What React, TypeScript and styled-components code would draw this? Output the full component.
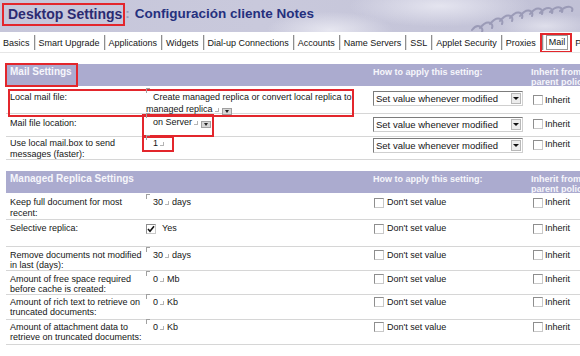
import React from 'react'
import styled, { createGlobalStyle } from 'styled-components'

const Global = createGlobalStyle`
  html, body { margin: 0; padding: 0; background: #fff; overflow: hidden; }
  body { width: 580px; font-family: "Liberation Sans", Arial, sans-serif; color: #151515; }
`

const RED = '#e3262c'

const Banner = styled.header`
  height: 32px;
  box-sizing: border-box;
  display: flex;
  align-items: flex-start;
  padding: 3px 0 0 2px;
  overflow: hidden;
  background:
    radial-gradient(ellipse 90px 26px at 330px 30px, rgba(236,236,244,.85), transparent 70%),
    radial-gradient(ellipse 130px 30px at 440px 6px, rgba(232,232,242,.9), transparent 70%),
    radial-gradient(ellipse 70px 20px at 545px 26px, rgba(230,230,240,.8), transparent 70%),
    linear-gradient(90deg, #c6c6da 0%, #c9c9dc 45%, #c1c1d6 100%);
`

const Title = styled.h1`
  margin: 0;
  font-size: 14px;
  line-height: 16px;
  font-weight: bold;
  color: #2b2b72;
  border: 2px solid ${RED};
  padding: 1px 1px 2px 4px;
  white-space: nowrap;
`

const Subtitle = styled.h2`
  margin: 3px 0 0 0;
  font-size: 13.5px;
  line-height: 16px;
  font-weight: bold;
  color: #25307e;
  white-space: nowrap;
`

const Colon = styled.span`
  color: #9a9ab8;
  margin-right: 5px;
`

const Coil = styled.svg`
  flex: none;
  margin-left: auto;
  margin-top: 1px;
`

const TabBar = styled.nav`
  display: flex;
  align-items: center;
  height: 19px;
  margin-top: 1px;
  font-size: 9px;
  white-space: nowrap;
  overflow: hidden;
  border-bottom: 1px solid #e6e6e6;
`

const Tab = styled.span`
  padding: 0 4px 0 3px;
  line-height: 14px;
  flex: none;
`

const TabSep = styled.span`
  flex: none;
  width: 1px;
  height: 15px;
  background: #8e8e8e;
  border-right: 1px solid #e0e0e0;
`

const ActiveTab = styled.span`
  flex: none;
  display: flex;
  align-items: center;
  gap: 2px;
  height: 20px;
  box-sizing: border-box;
  border: 2px solid ${RED};
  padding: 0 2px 0 0;
`

const ActiveLabel = styled.span`
  border: 1px solid #9a9a9a;
  padding: 0 2px;
  line-height: 13px;
`

const Panel = styled.main`
  padding: 11px 0 0 6px;
`

const Section = styled.section<{ $gap: number }>`
  margin-top: ${p => p.$gap}px;
`

const Bar = styled.div`
  display: grid;
  grid-template-columns: 367px 158px 1fr;
  height: 22px;
  background: #ababcf;
  color: #f6f6fb;
  font-weight: bold;
  white-space: nowrap;
`

const BarTitle = styled.div<{ $marked?: boolean }>`
  justify-self: start;
  margin: -1px 0 0 -1px;
  padding: 1px 4px 1px 3px;
  font-size: 10px;
  line-height: 12px;
  border: 2px solid ${p => (p.$marked ? RED : 'transparent')};
`

const BarCol = styled.div`
  font-size: 9px;
  line-height: 10px;
  padding-top: 3px;
`

const Row = styled.div<{ $h: number; $pt: number; $lh: number }>`
  display: grid;
  grid-template-columns: 367px 158px 1fr;
  align-items: start;
  height: ${p => p.$h}px;
  box-sizing: border-box;
  padding-top: ${p => p.$pt}px;
  border-bottom: 1px solid #d6d6d6;
  font-size: 9px;
  line-height: ${p => p.$lh}px;
  white-space: nowrap;
`

const Main = styled.div<{ $marked?: boolean }>`
  display: grid;
  grid-template-columns: ${p => (p.$marked ? '132px 210px' : '136px 212px')};
  justify-self: start;
  align-self: stretch;
  ${p =>
    p.$marked &&
    `margin: 0 0 2px 4px; box-shadow: 0 0 0 2px ${RED};`}
`

const Label = styled.div<{ $flush?: boolean }>`
  padding-left: ${p => (p.$flush ? 0 : 4)}px;
`

const Value = styled.div`
  padding-left: 4px;
  white-space: normal;
`

const Framed = styled.span<{ $w: number; $h: number; $mt: number }>`
  display: inline-block;
  vertical-align: top;
  box-sizing: border-box;
  width: ${p => p.$w}px;
  height: ${p => p.$h}px;
  margin: ${p => p.$mt}px 0 0 -2px;
  padding-left: 2px;
  box-shadow: 0 0 0 2px ${RED};
`

const OpenMark = styled.span`
  display: inline-block;
  width: 3px;
  height: 4px;
  border-top: 1px solid #a0a0a0;
  border-left: 1px solid #a0a0a0;
  vertical-align: top;
  margin: -3px 3px 0 0;
`

const CloseMark = styled.span`
  display: inline-block;
  width: 3px;
  height: 3px;
  border-right: 1px solid #b4b4b4;
  border-bottom: 1px solid #b4b4b4;
  margin: 0 3px 0 2px;
`

const DropBtn = styled.span`
  display: inline-flex;
  align-items: center;
  justify-content: center;
  width: 10px;
  height: 7px;
  box-sizing: border-box;
  background: #d6d6d6;
  border: 1px solid #a0a0a0;
  vertical-align: -1px;
  &::after {
    content: '';
    border-left: 2px solid transparent;
    border-right: 2px solid transparent;
    border-top: 3px solid #222;
  }
`

const Select = styled.div`
  display: flex;
  align-items: center;
  width: 150px;
  height: 15px;
  box-sizing: border-box;
  padding-left: 2px;
  background: #fff;
  border: 1px solid #7c7c7c;
  border-right-color: #cfcfcf;
  border-bottom-color: #cfcfcf;
  font-size: 9.5px;
  line-height: 13px;
`

const SelectText = styled.span`
  flex: 1;
`

const SelectArrow = styled.span`
  display: flex;
  align-items: center;
  justify-content: center;
  width: 10px;
  height: 11px;
  margin-right: 1px;
  box-sizing: border-box;
  background: #ececec;
  border: 1px solid #b8b8b8;
  &::after {
    content: '';
    border-left: 3px solid transparent;
    border-right: 3px solid transparent;
    border-top: 3px solid #111;
  }
`

const Cell = styled.div<{ $pl: number; $mt?: number }>`
  padding-left: ${p => p.$pl}px;
  margin-top: ${p => p.$mt ?? 0}px;
`

const CheckLabel = styled.label<{ $gap: number }>`
  display: inline-flex;
  align-items: center;
  gap: ${p => p.$gap}px;
`

const Box = styled.span`
  display: inline-flex;
  align-items: center;
  justify-content: center;
  flex: none;
  width: 10px;
  height: 10px;
  box-sizing: border-box;
  background: #fff;
  border: 1px solid #8e8e8e;
  border-right-color: #c8c8c8;
  border-bottom-color: #c8c8c8;
`

function Check({ label, checked, gap = 3 }: { label: string; checked?: boolean; gap?: number }) {
  return (
    <CheckLabel $gap={gap}>
      <Box>
        {checked && (
          <svg width="8" height="8" viewBox="0 0 8 8">
            <polyline points="1,4 3,6.2 7,1.2" fill="none" stroke="#111" strokeWidth="1.6" />
          </svg>
        )}
      </Box>
      {label}
    </CheckLabel>
  )
}

function Field({ children, drop }: { children: React.ReactNode; drop?: boolean }) {
  return (
    <>
      <OpenMark />
      {children}
      <CloseMark />
      {drop && <DropBtn />}
    </>
  )
}

function Lines({ lines }: { lines: string[] }) {
  return (
    <>
      {lines.map((l, i) => (
        <React.Fragment key={i}>
          {i > 0 && <br />}
          {l}
        </React.Fragment>
      ))}
    </>
  )
}

function ApplySelect() {
  return (
    <Select>
      <SelectText>Set value whenever modified</SelectText>
      <SelectArrow />
    </Select>
  )
}

const tabs = [
  'Basics',
  'Smart Upgrade',
  'Applications',
  'Widgets',
  'Dial-up Connections',
  'Accounts',
  'Name Servers',
  'SSL',
  'Applet Security',
  'Proxies',
]

type Replica = { label: string[]; value: React.ReactNode; h: number; pt: number; lh: number }

const replicaRows: Replica[] = [
  { label: ['Keep full document for most', 'recent:'], value: <><Field>30</Field>days</>, h: 27, pt: 4, lh: 11 },
  { label: ['Selective replica:'], value: <Check label="Yes" checked gap={6} />, h: 27, pt: 3, lh: 11 },
  { label: ['Remove documents not modified', 'in last (days):'], value: <><Field>30</Field>days</>, h: 24, pt: 3, lh: 10 },
  { label: ['Amount of free space required', 'before cache is created:'], value: <><Field>0</Field>Mb</>, h: 24, pt: 3, lh: 10 },
  { label: ['Amount of rich text to retrieve on', 'truncated documents:'], value: <><Field>0</Field>Kb</>, h: 25, pt: 2, lh: 10 },
  { label: ['Amount of attachment data to', 'retrieve on truncated documents:'], value: <><Field>0</Field>Kb</>, h: 25, pt: 2, lh: 10 },
]

function SectionBar({ title, marked }: { title: string; marked?: boolean }) {
  return (
    <Bar>
      <BarTitle $marked={marked}>{title}</BarTitle>
      <BarCol>How to apply this setting:</BarCol>
      <BarCol>
        <Lines lines={['Inherit from', 'parent policy']} />
      </BarCol>
    </Bar>
  )
}

export default function App() {
  return (
    <>
      <Global />
      <Banner>
        <Title>Desktop Settings</Title>
        <Subtitle>
          <Colon>:</Colon>Configuración cliente Notes
        </Subtitle>
        <Coil width="110" height="28" viewBox="0 0 110 28">
          <path
            d="M2 26 C 8 18, 14 24, 12 28 M10 24 C 18 14, 24 20, 22 24 M20 20 C 28 10, 34 16, 32 20 M30 17 C 38 7, 44 13, 42 17 M40 14 C 48 4, 54 10, 52 14 M50 12 C 58 2, 64 8, 62 12 M60 10 C 68 0, 74 6, 72 10 M70 9 C 78 0, 84 5, 82 9 M80 8 C 88 0, 94 4, 92 8 M90 7 C 98 0, 104 3, 102 7"
            fill="none"
            stroke="#8c8cab"
            strokeWidth="2"
            strokeLinecap="round"
            opacity="0.75"
          />
        </Coil>
      </Banner>

      <TabBar>
        {tabs.map((t, i) => (
          <React.Fragment key={t}>
            {i > 0 && <TabSep />}
            <Tab>{t}</Tab>
          </React.Fragment>
        ))}
        <ActiveTab>
          <TabSep />
          <ActiveLabel>Mail</ActiveLabel>
        </ActiveTab>
        <Tab>Productivity Tools</Tab>
      </TabBar>

      <Panel>
        <Section $gap={0}>
          <SectionBar title="Mail Settings" marked />

          <Row $h={28} $pt={5} $lh={12}>
            <Main $marked>
              <Label $flush>Local mail file:</Label>
              <Value>
                <Field drop>Create managed replica or convert local replica to managed replica</Field>
              </Value>
            </Main>
            <ApplySelect />
            <Cell $pl={2} $mt={3}>
              <Check label="Inherit" gap={2} />
            </Cell>
          </Row>

          <Row $h={23} $pt={3} $lh={12}>
            <Main>
              <Label>Mail file location:</Label>
              <Value>
                <Framed $w={68} $h={19} $mt={-1}>
                  <Field drop>on Server</Field>
                </Framed>
              </Value>
            </Main>
            <ApplySelect />
            <Cell $pl={2} $mt={1}>
              <Check label="Inherit" gap={2} />
            </Cell>
          </Row>

          <Row $h={23} $pt={1} $lh={11}>
            <Main>
              <Label>
                <Lines lines={['Use local mail.box to send', 'messages (faster):']} />
              </Label>
              <Value>
                <Framed $w={28} $h={12} $mt={0}>
                  <Field>1</Field>
                </Framed>
              </Value>
            </Main>
            <ApplySelect />
            <Cell $pl={2} $mt={1}>
              <Check label="Inherit" gap={2} />
            </Cell>
          </Row>
        </Section>

        <Section $gap={11}>
          <SectionBar title="Managed Replica Settings" />
          {replicaRows.map(r => (
            <Row key={r.label[0]} $h={r.h} $pt={r.pt} $lh={r.lh}>
              <Main>
                <Label>
                  <Lines lines={r.label} />
                </Label>
                <Value>{r.value}</Value>
              </Main>
              <Cell $pl={1}>
                <Check label="Don't set value" />
              </Cell>
              <Cell $pl={2}>
                <Check label="Inherit" gap={2} />
              </Cell>
            </Row>
          ))}
        </Section>
      </Panel>
    </>
  )
}
